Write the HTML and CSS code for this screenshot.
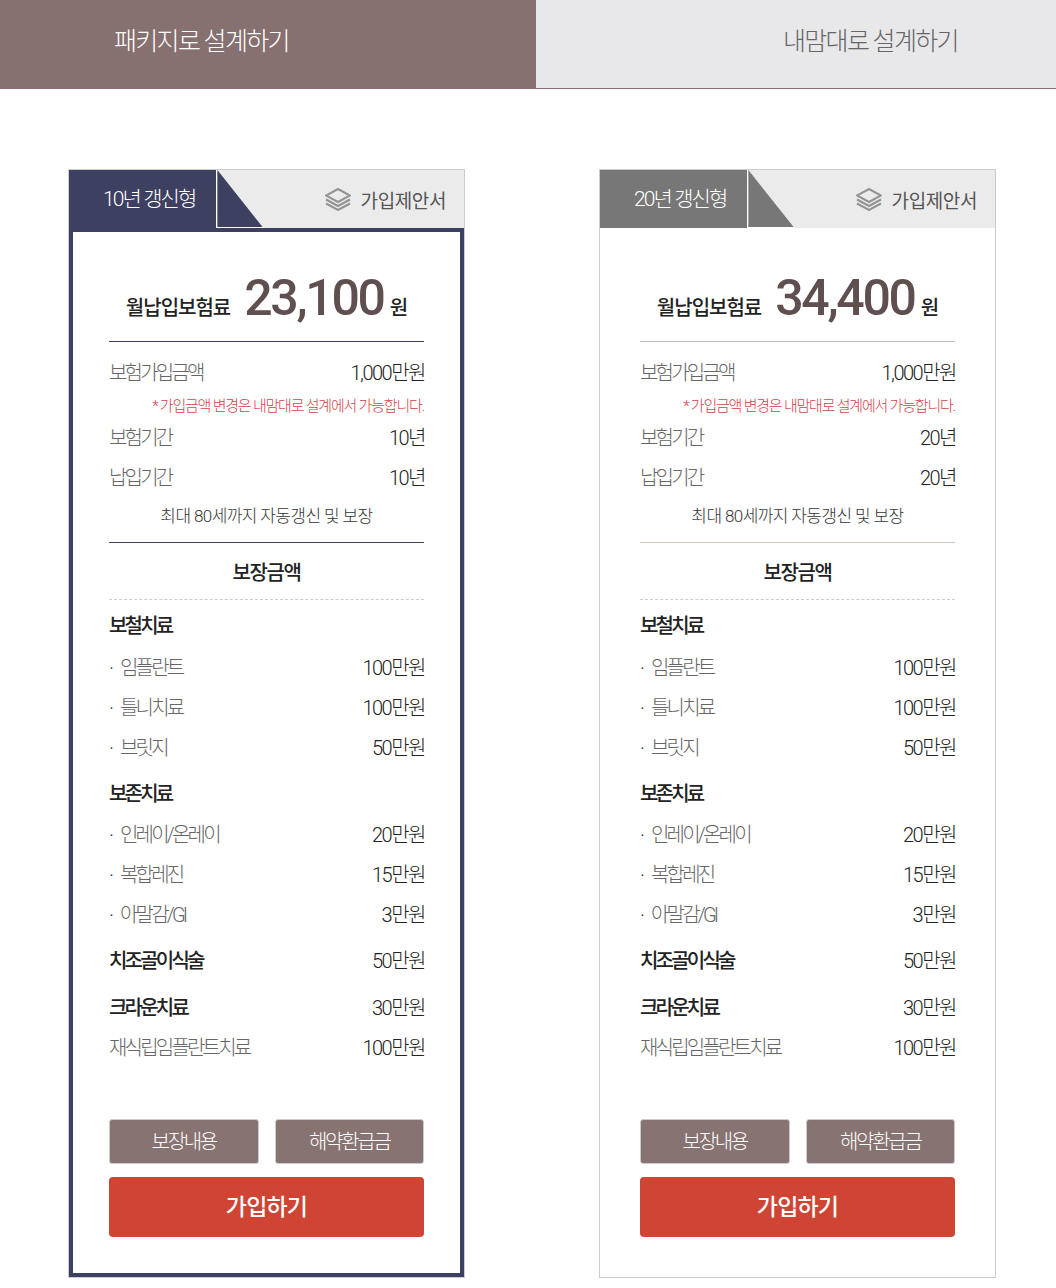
FILE: index.html
```html
<!DOCTYPE html>
<html lang="ko">
<head>
  <meta charset="UTF-8" />
  <title>패키지로 설계하기</title>
  <link rel="stylesheet" href="styles.css">
</head>
<body>

  <div class="tabs">
    <a class="tab tab-on">패키지로 설계하기</a>
    <a class="tab tab-off">내맘대로 설계하기</a>
  </div>

  <div class="plans">

    <div class="card card-navy">
      <div class="card-head">
        <div class="term">10년 갱신형</div>
        <svg class="corner" width="47" height="58" viewBox="0 0 47 58"><path d="M0 0L46 58H0Z" /></svg>
        <div class="proposal">
          <svg class="layers" width="26" height="24" viewBox="0 0 26 24"><path d="M13 2L25 8.5L13 15L1 8.5Z" /><path d="M1 12.5L13 19L25 12.5" /><path d="M1 16.5L13 23L25 16.5" /></svg>
          가입제안서
        </div>
      </div>
      <div class="card-body">
        <div class="price"><span class="price-label">월납입보험료</span><strong>23,100</strong><span class="price-unit">원</span></div>
        <div class="summary">
          <div class="row"><span>보험가입금액</span><b>1,000만원</b></div>
          <p class="note">* 가입금액 변경은 내맘대로 설계에서 가능합니다.</p>
          <div class="row"><span>보험기간</span><b>10년</b></div>
          <div class="row"><span>납입기간</span><b>10년</b></div>
          <p class="renew">최대 80세까지 자동갱신 및 보장</p>
        </div>
        <h3 class="cover-title">보장금액</h3>
        <div class="cover">
          <div class="row row-title"><span>보철치료</span></div>
          <div class="row"><span><i>·</i>임플란트</span><b>100만원</b></div>
          <div class="row"><span><i>·</i>틀니치료</span><b>100만원</b></div>
          <div class="row"><span><i>·</i>브릿지</span><b>50만원</b></div>
          <div class="row row-title"><span>보존치료</span></div>
          <div class="row"><span><i>·</i>인레이/온레이</span><b>20만원</b></div>
          <div class="row"><span><i>·</i>복합레진</span><b>15만원</b></div>
          <div class="row"><span><i>·</i>아말감/GI</span><b>3만원</b></div>
          <div class="row row-title"><span>치조골이식술</span><b>50만원</b></div>
          <div class="row row-title row-last"><span>크라운치료</span><b>30만원</b></div>
          <div class="row"><span>재식립임플란트치료</span><b>100만원</b></div>
        </div>
        <div class="btns">
          <a class="btn">보장내용</a>
          <a class="btn">해약환급금</a>
        </div>
        <a class="join">가입하기</a>
      </div>
    </div>

    <div class="card card-grey">
      <div class="card-head">
        <div class="term">20년 갱신형</div>
        <svg class="corner" width="47" height="58" viewBox="0 0 47 58"><path d="M0 0L46 58H0Z" /></svg>
        <div class="proposal">
          <svg class="layers" width="26" height="24" viewBox="0 0 26 24"><path d="M13 2L25 8.5L13 15L1 8.5Z" /><path d="M1 12.5L13 19L25 12.5" /><path d="M1 16.5L13 23L25 16.5" /></svg>
          가입제안서
        </div>
      </div>
      <div class="card-body">
        <div class="price"><span class="price-label">월납입보험료</span><strong>34,400</strong><span class="price-unit">원</span></div>
        <div class="summary">
          <div class="row"><span>보험가입금액</span><b>1,000만원</b></div>
          <p class="note">* 가입금액 변경은 내맘대로 설계에서 가능합니다.</p>
          <div class="row"><span>보험기간</span><b>20년</b></div>
          <div class="row"><span>납입기간</span><b>20년</b></div>
          <p class="renew">최대 80세까지 자동갱신 및 보장</p>
        </div>
        <h3 class="cover-title">보장금액</h3>
        <div class="cover">
          <div class="row row-title"><span>보철치료</span></div>
          <div class="row"><span><i>·</i>임플란트</span><b>100만원</b></div>
          <div class="row"><span><i>·</i>틀니치료</span><b>100만원</b></div>
          <div class="row"><span><i>·</i>브릿지</span><b>50만원</b></div>
          <div class="row row-title"><span>보존치료</span></div>
          <div class="row"><span><i>·</i>인레이/온레이</span><b>20만원</b></div>
          <div class="row"><span><i>·</i>복합레진</span><b>15만원</b></div>
          <div class="row"><span><i>·</i>아말감/GI</span><b>3만원</b></div>
          <div class="row row-title"><span>치조골이식술</span><b>50만원</b></div>
          <div class="row row-title row-last"><span>크라운치료</span><b>30만원</b></div>
          <div class="row"><span>재식립임플란트치료</span><b>100만원</b></div>
        </div>
        <div class="btns">
          <a class="btn">보장내용</a>
          <a class="btn">해약환급금</a>
        </div>
        <a class="join">가입하기</a>
      </div>
    </div>

  </div>

</body>
</html>
```

FILE: styles.css
```css
* {
  box-sizing: border-box;
}

body {
  margin: 0;
  font-family: Roboto, 'Noto Sans CJK KR', sans-serif;
  font-weight: 300;
  background-color: #fff;
  color: #222;
}

.tabs {
  display: flex;
  height: 89px;
  border-bottom: 1px solid #877070;
}

.tab {
  font-size: 25px;
  line-height: 83px;
  letter-spacing: -1.7px;
}

.tab-on {
  width: 536px;
  padding-left: 114px;
  background: #877070;
  color: #fff;
}

.tab-off {
  flex: 1;
  padding-left: 247px;
  background: #e8e8ea;
  color: #666;
}

.plans {
  display: flex;
  gap: 134px;
  margin-top: 80px;
  padding-left: 68px;
}

.card {
  position: relative;
  width: 397px;
  height: 1109px;
  border: 1px solid #ccc;
}

.card-head {
  display: flex;
  height: 58px;
  background: #ebebeb;
}

.term {
  width: 148px;
  height: 58px;
  padding-left: 34px;
  font-size: 21px;
  line-height: 58px;
  letter-spacing: -1.9px;
  color: #fff;
  border-right: 1px solid #fff;
}

.corner {
  display: block;
  border-bottom: 1px solid #fff;
}

.proposal {
  display: flex;
  align-items: center;
  flex: 1;
  justify-content: flex-end;
  gap: 10px;
  padding: 0 18px 0 0;
  font-size: 19px;
  font-weight: 400;
  letter-spacing: -0.4px;
  color: #555;
}

.layers {
  display: block;
  fill: none;
  stroke: #939393;
  stroke-width: 2;
}

.card-body {
  height: 1049px;
  padding: 0 40px;
}

.card-navy .term {
  background: #3d4060;
}

.card-navy .corner {
  fill: #3d4060;
}

.card-navy .card-body {
  padding: 0 36px;
  border: 4px solid #3d4060;
}

.card-grey .term {
  background: #777;
}

.card-grey .corner {
  fill: #777;
}

.price {
  display: flex;
  align-items: baseline;
  justify-content: center;
  height: 110px;
  padding: 34px 0 0 1px;
  border-bottom: 1px solid #3d4060;
}

.card-grey .price {
  height: 114px;
  padding-top: 38px;
  border-bottom-color: #bbb;
}

.price-label {
  font-size: 20px;
  font-weight: 500;
  letter-spacing: -1px;
}

.price strong {
  margin: 0 6px 0 14px;
  font-size: 50px;
  font-weight: 500;
  line-height: 64px;
  letter-spacing: -2.3px;
  color: #5f4f4e;
}

.price-unit {
  font-size: 20px;
  font-weight: 500;
}

.summary {
  padding-top: 10px;
  height: 201px;
  border-bottom: 1px solid #3d4060;
}

.card-grey .summary {
  border-bottom-color: #cfc8b8;
}

.row {
  display: flex;
  justify-content: space-between;
  height: 40px;
  font-size: 20px;
  line-height: 42px;
  letter-spacing: -2.8px;
  color: #666;
}

.row b {
  margin-right: -1px;
  font-weight: 300;
  letter-spacing: -1.5px;
  color: #222;
}

.row i {
  display: inline-block;
  width: 11px;
  font-style: normal;
  color: #333;
}

.note {
  margin: 0;
  height: 25px;
  font-size: 15px;
  line-height: 28px;
  letter-spacing: -1.2px;
  text-align: right;
  color: #d6414a;
}

.renew {
  margin: 0;
  height: 36px;
  font-size: 17px;
  line-height: 38px;
  letter-spacing: -0.6px;
  text-align: center;
  color: #333;
}

.cover-title {
  margin: 0;
  height: 57px;
  font-size: 20px;
  font-weight: 500;
  line-height: 60px;
  letter-spacing: -1.4px;
  text-align: center;
  color: #222;
  border-bottom: 1px dashed #ccc;
}

.cover {
  height: 519px;
  padding-top: 5px;
}

.row-title {
  margin: 6px 0 1px;
  font-weight: 500;
  color: #222;
}

.row-title:first-child {
  margin-top: 0;
  margin-bottom: 2px;
}

.row-last {
  margin: 7px 0 0;
}

.btns {
  display: flex;
  gap: 16px;
}

.btn {
  flex: 1;
  height: 45px;
  background: #877371;
  border: 1px solid #ccc;
  border-radius: 3px;
  color: #fff;
  font-size: 20px;
  line-height: 44px;
  letter-spacing: -2.3px;
  text-align: center;
}

.join {
  display: block;
  height: 60px;
  margin-top: 13px;
  background: #d04434;
  border-radius: 4px;
  color: #fff;
  font-size: 23px;
  font-weight: 500;
  line-height: 62px;
  letter-spacing: -0.8px;
  text-align: center;
}
```
